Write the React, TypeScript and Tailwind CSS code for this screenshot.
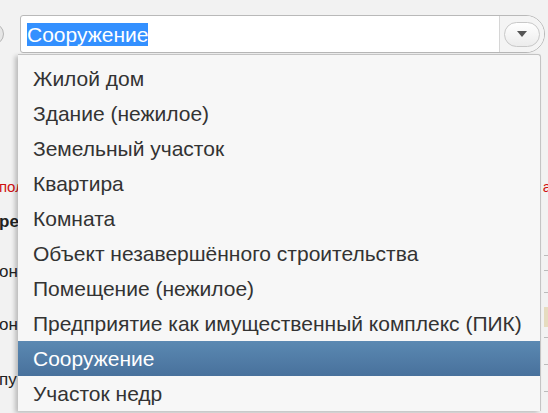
const options = [
  "Жилой дом",
  "Здание (нежилое)",
  "Земельный участок",
  "Квартира",
  "Комната",
  "Объект незавершённого строительства",
  "Помещение (нежилое)",
  "Предприятие как имущественный комплекс (ПИК)",
  "Сооружение",
  "Участок недр",
];

const selected = "Сооружение";

export default function App() {
  return (
    <div className="relative w-[548px] h-[413px] overflow-hidden bg-[#f2f2f2] font-['Liberation_Sans',Arial,sans-serif]">
      {/* background form, mostly covered by the open list */}
      <div className="flex flex-col text-[17px] text-[#222]">
        <div className="h-[15px]" />
        <div className="flex items-center h-[38px]">
          <div className="w-[22px] h-[22px] -ml-[18px] rounded-full border border-[#b5b5b5] bg-[#e6e6e6] shrink-0" />
          <div className="ml-[16px] flex-1 flex h-[38px] rounded-r-[19px] rounded-l-[3px] border border-[#b9b9b9] bg-white mr-[3px]">
            <div className="flex-1 flex items-center pl-[6px] border-r border-[#d6d6d6]">
              <span className="bg-[#3390ff] text-white text-[21px] leading-[23px]">{selected}</span>
            </div>
            <div className="w-[44px] flex items-center justify-center bg-[#f4f4f4] rounded-r-[18px]">
              <div className="w-[36px] h-[25px] rounded-full border border-[#c8c8c8] bg-gradient-to-b from-white to-[#ececec] flex items-center justify-center">
                <div className="w-0 h-0 border-l-[5px] border-r-[5px] border-t-[6px] border-l-transparent border-r-transparent border-t-[#555]" />
              </div>
            </div>
          </div>
        </div>
        <div className="mt-[10px] h-[24px] leading-[24px] -ml-[13px] text-[#2a6ebb]">с</div>
        <div className="mt-[20px] h-[24px] leading-[24px] -ml-[14px] text-[#999]">с</div>
        <div className="mt-[44px] h-[24px] leading-[24px] flex justify-between text-[15px] text-[#d01010]">
          <span className="-ml-[1px]">пол</span>
          <span className="-mr-[3px]">а</span>
        </div>
        <div className="mt-[11px] h-[24px] leading-[24px] font-bold -ml-[1px]">ре</div>
        <div className="mt-[26px] h-[24px] leading-[24px] -ml-[1px]">он</div>
        <div className="mt-[29px] h-[24px] leading-[24px] -ml-[1px]">он</div>
        <div className="mt-[31px] h-[24px] leading-[24px] -ml-[1px]">пу</div>
      </div>

      {/* right edge fragments */}
      <div className="absolute right-0 top-[255px] w-[4px] flex flex-col">
        <div className="h-[1px] bg-[#bbb]" />
        <div className="mt-[14px] h-[1px] bg-[#bbb]" />
        <div className="mt-[21px] h-[1px] bg-[#bbb]" />
        <div className="mt-[14px] h-[20px] bg-[#e6dcc0]" />
        <div className="mt-[10px] h-[1px] bg-[#bbb]" />
        <div className="mt-[26px] h-[1px] bg-[#bbb]" />
        <div className="mt-[26px] h-[1px] bg-[#bbb]" />
      </div>

      {/* open list */}
      <ul className="absolute left-[18px] top-[54px] w-[523px] pt-[6px] bg-[#f7f7f7] border-r border-t border-[#c4c4c4] rounded-tr-[3px] shadow-[-3px_2px_4px_rgba(0,0,0,0.22)]">
        {options.map((o) => (
          <li
            key={o}
            className={
              o === selected
                ? "h-[35px] flex items-center pl-[15px] text-[21px] text-white bg-gradient-to-b from-[#5b89b2] to-[#48719c]"
                : "h-[35px] flex items-center pl-[15px] text-[21px] text-[#333]"
            }
          >
            {o}
          </li>
        ))}
      </ul>
    </div>
  );
}
